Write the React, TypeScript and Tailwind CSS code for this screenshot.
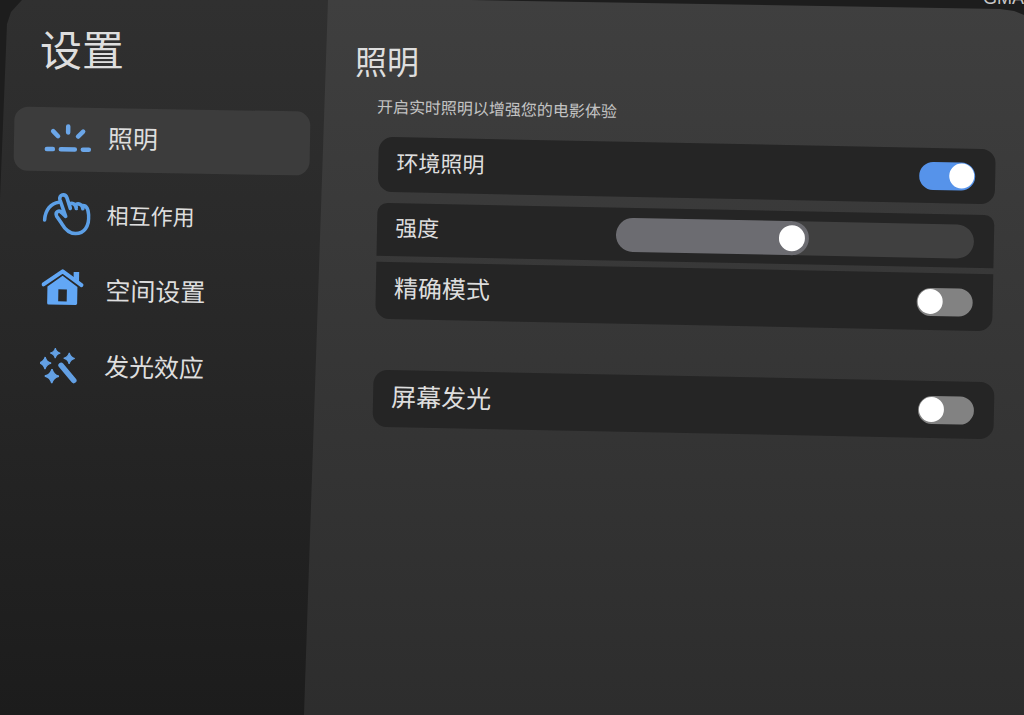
import React, { useState } from 'react';
import clsx from 'clsx';

const Star: React.FC<{ x: number; y: number; r: number }> = ({ x, y, r }) => (
  <path
    transform={`translate(${x} ${y}) scale(${r})`}
    d="M0 -1 Q.2 -.2 1 0 Q.2 .2 0 1 Q-.2 .2 -1 0 Q-.2 -.2 0 -1Z"
    fill="currentColor"
    stroke="currentColor"
    strokeWidth="0.2"
  />
);

const LightIcon = () => (
  <svg viewBox="0 0 48 48" className="w-12 h-12 shrink-0 text-[#6ba6e8]" fill="none" stroke="currentColor" strokeWidth="4.500" strokeLinecap="round">
    <path d="M3 34h6M17 34h14M39 34h6M24 11v6M9 16l5 5M39 16l-5 5" />
  </svg>
);

const HandIcon = () => (
  <svg viewBox="0 0 48 48" className="w-12 h-12 shrink-0 text-[#5c9fe6]" fill="none" stroke="currentColor" strokeWidth="3.600" strokeLinecap="round" strokeLinejoin="round">
    <path d="M2 29C2.500 19 8 12 16 11" />
    <path d="M23 25L17 8.500C15.500 3.500 22 1.500 24 6.500L27.500 17L26.500 12.500C29 11 33 12 33.500 17L33 13C35.500 11.500 39.500 12.500 40 17L39.500 14C44 13.500 45.500 18 46 23C47 35 41.500 42 33 42C26 42 22 37 19 32L14 25C12 20.500 16.500 18.500 19 21.500L23 25" />
  </svg>
);

const HomeIcon = () => (
  <svg viewBox="0 0 48 48" className="w-12 h-12 shrink-0 text-[#62a7f5]" fill="currentColor">
    <path d="M32 4.500h5.500V14L32 10z" />
    <path d="M2 17.500L21 4L40 17.500" fill="none" stroke="currentColor" strokeWidth="4" strokeLinecap="round" strokeLinejoin="round" />
    <path fillRule="evenodd" d="M21 8.500L36 19.500V36a1.500 1.500 0 0 1-1.500 1.500h-27A1.500 1.500 0 0 1 6 36V19.500zM17 22v12h8.500V22z" />
  </svg>
);

const WandIcon = () => (
  <svg viewBox="0 0 48 48" className="w-12 h-12 shrink-0 text-[#63a0e4]" fill="none">
    <path d="M21 22L34 37" stroke="currentColor" strokeWidth="5.500" strokeLinecap="round" />
    <Star x={15} y={10} r={5} />
    <Star x={29} y={15} r={5.5} />
    <Star x={5} y={20} r={6} />
    <Star x={12} y={33} r={7} />
  </svg>
);

const navItems = [
  { id: 'lighting', label: '照明', icon: <LightIcon />, size: 'text-[25px]' },
  { id: 'interaction', label: '相互作用', icon: <HandIcon />, size: 'text-[22px]' },
  { id: 'space', label: '空间设置', icon: <HomeIcon />, size: 'text-[25px]' },
  { id: 'glow', label: '发光效应', icon: <WandIcon />, size: 'text-[25px]' },
];

interface ToggleProps {
  id: string;
  defaultChecked?: boolean;
}

const Toggle: React.FC<ToggleProps> = ({ id, defaultChecked }) => (
  <input
    id={id}
    type="checkbox"
    role="switch"
    defaultChecked={defaultChecked}
    className="appearance-none shrink-0 flex items-center w-14 h-7 px-px rounded-full cursor-pointer bg-[#828282] checked:bg-[#5693ea] checked:justify-end before:content-[''] before:block before:w-[25px] before:h-[25px] before:rounded-full before:bg-white"
  />
);

interface RowProps {
  id: string;
  label: string;
  className: string;
  children: React.ReactNode;
}

const Row: React.FC<RowProps> = ({ id, label, className, children }) => (
  <div className={clsx('flex items-center justify-between pl-[18px] pr-5 bg-[#252525]', className)}>
    <label htmlFor={id} className="pb-2 leading-8">{label}</label>
    {children}
  </div>
);

const App: React.FC = () => {
  const [active, setActive] = useState('lighting');
  const [strength, setStrength] = useState(49);

  return (
    <div className="relative flex min-h-screen overflow-hidden bg-[#1d1d1d] text-[#dedede] font-['Noto_Sans_CJK_SC',sans-serif]">
      {/* Sidebar */}
      <aside className="w-[328px] shrink-0 pt-6 bg-linear-to-b from-[#303030] via-[#272727] to-[#1c1c1c] [clip-path:polygon(22px_0,100%_0,100%_100%,0_100%,0_200px,7px_24px,11px_12px)]">
        <h1 className="pl-10 text-[42px] leading-[48px]">设置</h1>
        <nav className="mt-[37px] ml-3 mr-5">
          <ul className="flex flex-col gap-3 rotate-1">
            {navItems.map((item) => (
              <li key={item.id}>
                <button
                  type="button"
                  onClick={() => setActive(item.id)}
                  className={clsx(
                    'flex items-center gap-4 w-full h-16 pl-[30px] rounded-[14px] text-left',
                    item.size,
                    active === item.id && 'bg-[#3c3c3c]'
                  )}
                >
                  {item.icon}
                  <span className="pb-1">{item.label}</span>
                </button>
              </li>
            ))}
          </ul>
        </nav>
      </aside>

      {/* Lighting panel */}
      <main className="flex-1 min-w-0 -ml-6 pt-10 pr-[30px] bg-linear-to-b from-[#3f3f3f] via-[#363636] to-[#2d2d2d] [clip-path:polygon(24px_0,166px_0,calc(100%-24px)_9px,calc(100%-10px)_11px,100%_15px,100%_100%,0_100%)]">
        <h2 className="pl-[51px] text-[32px] leading-10">照明</h2>
        <div className="pl-[73px]">
          <p className="w-fit mt-4 text-base leading-6 text-[#c4c4c4] rotate-[1.15deg]">
            开启实时照明以增强您的电影体验
          </p>

          <section className="mt-[23px] rotate-[1.15deg]">
            <Row id="ambient" label="环境照明" className="h-[55px] mb-[11px] rounded-[14px] text-[22px]">
              <Toggle id="ambient" defaultChecked />
            </Row>
            <Row id="strength" label="强度" className="h-[53px] mb-[6px] rounded-t-[10px] text-[22px]">
              <input
                id="strength"
                type="range"
                min={0}
                max={100}
                value={strength}
                onChange={(e) => setStrength(Number(e.target.value))}
                style={{ backgroundImage: `linear-gradient(to right, #6c6c71 ${strength}%, #404040 ${strength}%)` }}
                className="appearance-none w-[358px] h-[34px] rounded-full cursor-pointer [&::-webkit-slider-thumb]:appearance-none [&::-webkit-slider-thumb]:w-[34px] [&::-webkit-slider-thumb]:h-[34px] [&::-webkit-slider-thumb]:rounded-full [&::-webkit-slider-thumb]:border-4 [&::-webkit-slider-thumb]:border-[#6c6c71] [&::-webkit-slider-thumb]:bg-white"
              />
            </Row>
            <Row id="precise" label="精确模式" className="h-[57px] rounded-b-[14px] text-[24px]">
              <Toggle id="precise" />
            </Row>
          </section>

          <section className="mt-[51px] -ml-1 rotate-[1.15deg]">
            <Row id="screen-glow" label="屏幕发光" className="h-[57px] rounded-[14px] text-[25px]">
              <Toggle id="screen-glow" />
            </Row>
          </section>
        </div>
      </main>

      {/* Caption behind the window, cut off by the top edge */}
      <span className="absolute -top-3 right-0 font-['Liberation_Sans',sans-serif] text-[18px] leading-5 text-[#c8c8c8]">GMA</span>
    </div>
  );
};

export default App;
